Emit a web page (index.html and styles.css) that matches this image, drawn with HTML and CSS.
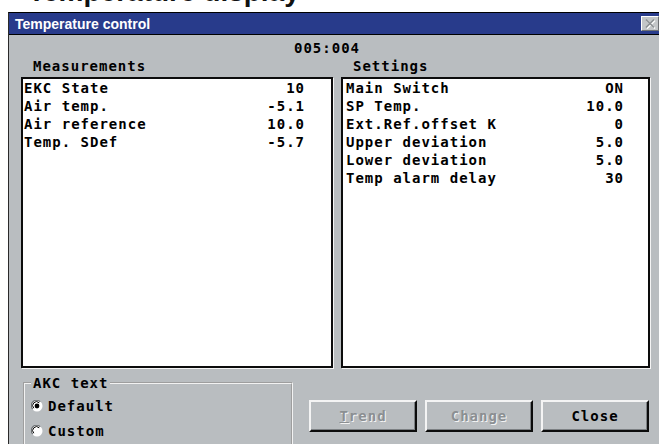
FILE: index.html
```html
<!DOCTYPE html>
<html lang="en">
<head>
<meta charset="utf-8">
<title>Temperature control</title>
<link rel="stylesheet" href="styles.css">
</head>
<body>
<div class="heading"><h1 class="heading-text">Temperature display</h1></div>

<div class="window">
  <div class="titlebar">
    <span class="title">Temperature control</span>
    <span class="close-btn">
      <svg width="12" height="11" viewBox="0 0 12 11">
        <path d="M2 1.5 L10 9.5 M10 1.5 L2 9.5" stroke="#ffffff" stroke-width="1.6" transform="translate(1 1)"/>
        <path d="M2 1.5 L10 9.5 M10 1.5 L2 9.5" stroke="#8c9093" stroke-width="1.6"/>
      </svg>
    </span>
  </div>

  <div class="content">
    <div class="counter">005:004</div>

    <div class="panels">
      <section class="panel panel-measure">
        <div class="panel-label">Measurements</div>
        <div class="list">
          <div class="row"><span>EKC State</span><span>10</span></div>
          <div class="row"><span>Air temp.</span><span>-5.1</span></div>
          <div class="row"><span>Air reference</span><span>10.0</span></div>
          <div class="row"><span>Temp. SDef</span><span>-5.7</span></div>
        </div>
      </section>

      <section class="panel panel-settings">
        <div class="panel-label">Settings</div>
        <div class="list">
          <div class="row"><span>Main Switch</span><span>ON</span></div>
          <div class="row"><span>SP Temp.</span><span>10.0</span></div>
          <div class="row"><span>Ext.Ref.offset K</span><span>0</span></div>
          <div class="row"><span>Upper deviation</span><span>5.0</span></div>
          <div class="row"><span>Lower deviation</span><span>5.0</span></div>
          <div class="row"><span>Temp alarm delay</span><span>30</span></div>
        </div>
      </section>
    </div>

    <div class="footer">
      <fieldset class="akc">
        <legend class="akc-legend">AKC text</legend>
        <div class="radio">
          <svg class="radio-mark" width="12" height="12" viewBox="0 0 12 12">
            <circle cx="6" cy="6" r="5.5" fill="#ffffff"/>
            <path d="M1.8 9.2 A5 5 0 0 1 9.2 1.8" fill="none" stroke="#6e7275" stroke-width="1.2"/>
            <path d="M2.8 8.2 A3.6 3.6 0 0 1 8.2 2.8" fill="none" stroke="#000000" stroke-width="1"/>
            <circle cx="6" cy="6" r="2.4" fill="#000000"/>
          </svg>
          <span>Default</span>
        </div>
        <div class="radio">
          <svg class="radio-mark" width="12" height="12" viewBox="0 0 12 12">
            <circle cx="6" cy="6" r="5.5" fill="#ffffff"/>
            <path d="M1.8 9.2 A5 5 0 0 1 9.2 1.8" fill="none" stroke="#6e7275" stroke-width="1.2"/>
            <path d="M2.8 8.2 A3.6 3.6 0 0 1 8.2 2.8" fill="none" stroke="#000000" stroke-width="1"/>
          </svg>
          <span>Custom</span>
        </div>
      </fieldset>

      <div class="buttons">
        <button class="btn btn-disabled"><span class="accel">T</span>rend</button>
        <button class="btn btn-disabled">Change</button>
        <button class="btn">Close</button>
      </div>
    </div>
  </div>
</div>
</body>
</html>
```
FILE: styles.css
```css
html, body {
  margin: 0;
  padding: 0;
  background: #ffffff;
}

body {
  width: 659px;
  height: 444px;
  overflow: hidden;
}

/* page heading, mostly scrolled off the top */
.heading {
  height: 12px;
  overflow: hidden;
}

.heading-text {
  margin: -22px 0 0 28px;
  font: bold 28px/28px "Liberation Sans", Arial, sans-serif;
  color: #111111;
  white-space: nowrap;
}

/* dialog window */
.window {
  margin-left: 8px;
  width: 652px;
  height: 440px;
  border-left: 1px solid #2a2a2a;
  border-top: 1px solid #000000;
  background: #b9bdc0;
}

.titlebar {
  height: 21px;
  display: flex;
  align-items: center;
  justify-content: space-between;
  background: #283b8b;
  border-bottom: 1px solid #000000;
  padding-left: 6px;
  padding-right: 2px;
}

.title {
  font: bold 14px "Liberation Sans", Arial, sans-serif;
  color: #ffffff;
}

.close-btn {
  width: 14px;
  height: 11px;
  padding: 1px 1px;
  display: flex;
  align-items: center;
  justify-content: center;
  background: #c3c6c8;
  border-top: 1px solid #ffffff;
  border-left: 1px solid #ffffff;
  border-right: 1px solid #6d7073;
  border-bottom: 1px solid #6d7073;
}

.content {
  padding: 4px 0 0 12px;
  font: bold 14px/18px "DejaVu Sans Mono", monospace;
  letter-spacing: 1px;
  color: #000000;
}

.counter {
  width: 629px;
  padding-right: 17px;
  box-sizing: border-box;
  text-align: center;
}

.panels {
  display: flex;
  gap: 8px;
}

.panel-label {
  padding-left: 12px;
  margin-bottom: 2px;
}

.list {
  height: 287px;
  background: #ffffff;
  border: 2px solid #0c0c0c;
  box-shadow: 1px 1px 0 #f4f4f4;
}

.panel-measure {
  width: 312px;
}

.panel-measure .list {
  padding: 0 26px 0 1px;
}

.panel-settings {
  width: 309px;
}

.panel-settings .list {
  padding: 0 24px 0 3px;
}

.row {
  display: flex;
  justify-content: space-between;
  white-space: pre;
}

/* bottom area: option group and command buttons */
.footer {
  display: flex;
  margin-top: 6px;
}

.akc {
  margin: 0 0 0 2px;
  width: 270px;
  height: 80px;
  box-sizing: border-box;
  padding: 5px 0 0 6px;
  border: 2px groove #f2f2f2;
  border-bottom: none;
  min-inline-size: 0;
}

.akc-legend {
  padding: 0 2px;
  line-height: 18px;
}

.radio {
  height: 25px;
  display: flex;
  align-items: flex-start;
  gap: 5px;
}

.radio-mark {
  margin-top: 3px;
}

.buttons {
  display: flex;
  gap: 8px;
  margin: 26px 0 0 16px;
}

.btn {
  width: 108px;
  height: 32px;
  padding: 0;
  font: bold 14px/18px "DejaVu Sans Mono", monospace;
  letter-spacing: 1px;
  color: #000000;
  background: #b9bdc0;
  border-top: 2px solid #f4f4f4;
  border-left: 2px solid #f4f4f4;
  border-right: 2px solid #0c0c0c;
  border-bottom: 2px solid #0c0c0c;
  box-shadow: inset -1px -1px 0 #7c8083;
}

.btn-disabled {
  color: #8b8f92;
  text-shadow: 1px 1px 0 #f4f4f4;
}

.accel {
  text-decoration: underline;
}
```
